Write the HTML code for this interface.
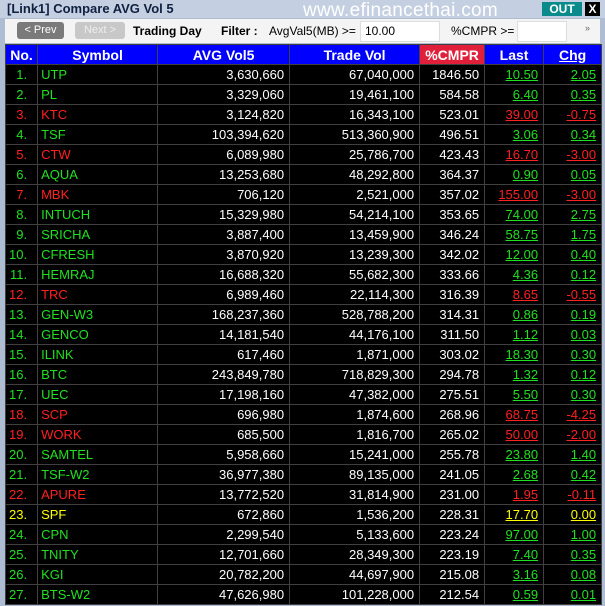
<!DOCTYPE html><html><head><style>
body{margin:0;width:605px;height:606px;background:#aebdd2;font-family:"Liberation Sans",sans-serif;position:relative;overflow:hidden}
.title{position:absolute;left:0;top:0;width:605px;height:18px;background:#c4d0e2}
.title .t{position:absolute;left:7px;top:1px;font-size:13px;font-weight:bold;color:#102040}
.wm{position:absolute;left:303px;top:0px;font-size:19px;color:#fff;letter-spacing:0.3px}
.out{position:absolute;left:542px;top:2px;width:40px;height:14px;background:#0a8a8a;color:#fff;font-size:12px;font-weight:bold;text-align:center;line-height:14px}
.x{position:absolute;left:585px;top:2px;width:15px;height:14px;background:#000;color:#fff;font-size:12px;font-weight:bold;text-align:center;line-height:14px}
.tb{position:absolute;left:5px;top:19px;width:595px;height:24px;background:#f4f4f4;font-size:12px}
.tb span{position:absolute;top:5px}
.btn{position:absolute;top:3px;height:17px;border-radius:3px;font-size:11px;color:#fff;text-align:center;line-height:17px}
.inp{position:absolute;top:2px;height:19px;background:#fff;border:1px solid #ddd}
table{position:absolute;left:5px;top:44px;border-collapse:collapse;table-layout:fixed;background:#000}
td,th{border:1px solid #404040;height:19px;padding:0 5px 0 3px;font-size:13px;white-space:nowrap;overflow:hidden}
th{background:#0000ff;color:#fff;font-weight:bold;font-size:14px;text-align:center;padding:0 3px}
td{color:#fff;text-align:right}
td.n{text-align:right;padding-right:10px}
td.s{text-align:left}
.g{color:#20e020}.r{color:#ff2020}.y{color:#ffff00}
td u{text-decoration:underline}
</style></head><body>
<div class="title"><span class="t">[Link1] Compare AVG Vol 5</span><span class="wm">www.efinancethai.com</span><div class="out">OUT</div><div class="x">X</div></div>
<div class="tb">
<div class="btn" style="left:12px;width:47px;background:#7a7a7a">&lt; Prev</div>
<div class="btn" style="left:70px;width:50px;background:#c8c8c8;color:#eee">Next &gt;</div>
<span style="left:128px;font-weight:bold">Trading Day</span>
<span style="left:216px;font-weight:bold">Filter :</span>
<span style="left:264px">AvgVal5(MB) &gt;=</span>
<div class="inp" style="left:355px;width:78px"><span style="left:4px;top:2px">10.00</span></div>
<span style="left:446px">%CMPR &gt;=</span>
<div class="inp" style="left:512px;width:48px"></div>
<span style="left:580px;font-size:9px;top:4px;color:#666">»</span>
</div>
<table>
<colgroup><col style="width:30px"><col style="width:120px"><col style="width:132px"><col style="width:130px"><col style="width:65px"><col style="width:59px"><col style="width:58px"></colgroup>
<tr><th>No.</th><th>Symbol</th><th>AVG Vol5</th><th>Trade Vol</th><th style="background:#e0203a">%CMPR</th><th>Last</th><th><u>Chg</u></th></tr>
<tbody id="b">
<tr><td class="n g">1.</td><td class="s g">UTP</td><td>3,630,660</td><td>67,040,000</td><td>1846.50</td><td class="g"><u>10.50</u></td><td class="g"><u>2.05</u></td></tr>
<tr><td class="n g">2.</td><td class="s g">PL</td><td>3,329,060</td><td>19,461,100</td><td>584.58</td><td class="g"><u>6.40</u></td><td class="g"><u>0.35</u></td></tr>
<tr><td class="n r">3.</td><td class="s r">KTC</td><td>3,124,820</td><td>16,343,100</td><td>523.01</td><td class="r"><u>39.00</u></td><td class="r"><u>-0.75</u></td></tr>
<tr><td class="n g">4.</td><td class="s g">TSF</td><td>103,394,620</td><td>513,360,900</td><td>496.51</td><td class="g"><u>3.06</u></td><td class="g"><u>0.34</u></td></tr>
<tr><td class="n r">5.</td><td class="s r">CTW</td><td>6,089,980</td><td>25,786,700</td><td>423.43</td><td class="r"><u>16.70</u></td><td class="r"><u>-3.00</u></td></tr>
<tr><td class="n g">6.</td><td class="s g">AQUA</td><td>13,253,680</td><td>48,292,800</td><td>364.37</td><td class="g"><u>0.90</u></td><td class="g"><u>0.05</u></td></tr>
<tr><td class="n r">7.</td><td class="s r">MBK</td><td>706,120</td><td>2,521,000</td><td>357.02</td><td class="r"><u>155.00</u></td><td class="r"><u>-3.00</u></td></tr>
<tr><td class="n g">8.</td><td class="s g">INTUCH</td><td>15,329,980</td><td>54,214,100</td><td>353.65</td><td class="g"><u>74.00</u></td><td class="g"><u>2.75</u></td></tr>
<tr><td class="n g">9.</td><td class="s g">SRICHA</td><td>3,887,400</td><td>13,459,900</td><td>346.24</td><td class="g"><u>58.75</u></td><td class="g"><u>1.75</u></td></tr>
<tr><td class="n g">10.</td><td class="s g">CFRESH</td><td>3,870,920</td><td>13,239,300</td><td>342.02</td><td class="g"><u>12.00</u></td><td class="g"><u>0.40</u></td></tr>
<tr><td class="n g">11.</td><td class="s g">HEMRAJ</td><td>16,688,320</td><td>55,682,300</td><td>333.66</td><td class="g"><u>4.36</u></td><td class="g"><u>0.12</u></td></tr>
<tr><td class="n r">12.</td><td class="s r">TRC</td><td>6,989,460</td><td>22,114,300</td><td>316.39</td><td class="r"><u>8.65</u></td><td class="r"><u>-0.55</u></td></tr>
<tr><td class="n g">13.</td><td class="s g">GEN-W3</td><td>168,237,360</td><td>528,788,200</td><td>314.31</td><td class="g"><u>0.86</u></td><td class="g"><u>0.19</u></td></tr>
<tr><td class="n g">14.</td><td class="s g">GENCO</td><td>14,181,540</td><td>44,176,100</td><td>311.50</td><td class="g"><u>1.12</u></td><td class="g"><u>0.03</u></td></tr>
<tr><td class="n g">15.</td><td class="s g">ILINK</td><td>617,460</td><td>1,871,000</td><td>303.02</td><td class="g"><u>18.30</u></td><td class="g"><u>0.30</u></td></tr>
<tr><td class="n g">16.</td><td class="s g">BTC</td><td>243,849,780</td><td>718,829,300</td><td>294.78</td><td class="g"><u>1.32</u></td><td class="g"><u>0.12</u></td></tr>
<tr><td class="n g">17.</td><td class="s g">UEC</td><td>17,198,160</td><td>47,382,000</td><td>275.51</td><td class="g"><u>5.50</u></td><td class="g"><u>0.30</u></td></tr>
<tr><td class="n r">18.</td><td class="s r">SCP</td><td>696,980</td><td>1,874,600</td><td>268.96</td><td class="r"><u>68.75</u></td><td class="r"><u>-4.25</u></td></tr>
<tr><td class="n r">19.</td><td class="s r">WORK</td><td>685,500</td><td>1,816,700</td><td>265.02</td><td class="r"><u>50.00</u></td><td class="r"><u>-2.00</u></td></tr>
<tr><td class="n g">20.</td><td class="s g">SAMTEL</td><td>5,958,660</td><td>15,241,000</td><td>255.78</td><td class="g"><u>23.80</u></td><td class="g"><u>1.40</u></td></tr>
<tr><td class="n g">21.</td><td class="s g">TSF-W2</td><td>36,977,380</td><td>89,135,000</td><td>241.05</td><td class="g"><u>2.68</u></td><td class="g"><u>0.42</u></td></tr>
<tr><td class="n r">22.</td><td class="s r">APURE</td><td>13,772,520</td><td>31,814,900</td><td>231.00</td><td class="r"><u>1.95</u></td><td class="r"><u>-0.11</u></td></tr>
<tr><td class="n y">23.</td><td class="s y">SPF</td><td>672,860</td><td>1,536,200</td><td>228.31</td><td class="y"><u>17.70</u></td><td class="y"><u>0.00</u></td></tr>
<tr><td class="n g">24.</td><td class="s g">CPN</td><td>2,299,540</td><td>5,133,600</td><td>223.24</td><td class="g"><u>97.00</u></td><td class="g"><u>1.00</u></td></tr>
<tr><td class="n g">25.</td><td class="s g">TNITY</td><td>12,701,660</td><td>28,349,300</td><td>223.19</td><td class="g"><u>7.40</u></td><td class="g"><u>0.35</u></td></tr>
<tr><td class="n g">26.</td><td class="s g">KGI</td><td>20,782,200</td><td>44,697,900</td><td>215.08</td><td class="g"><u>3.16</u></td><td class="g"><u>0.08</u></td></tr>
<tr><td class="n g">27.</td><td class="s g">BTS-W2</td><td>47,626,980</td><td>101,228,000</td><td>212.54</td><td class="g"><u>0.59</u></td><td class="g"><u>0.01</u></td></tr>
</tbody></table>
</body></html>
